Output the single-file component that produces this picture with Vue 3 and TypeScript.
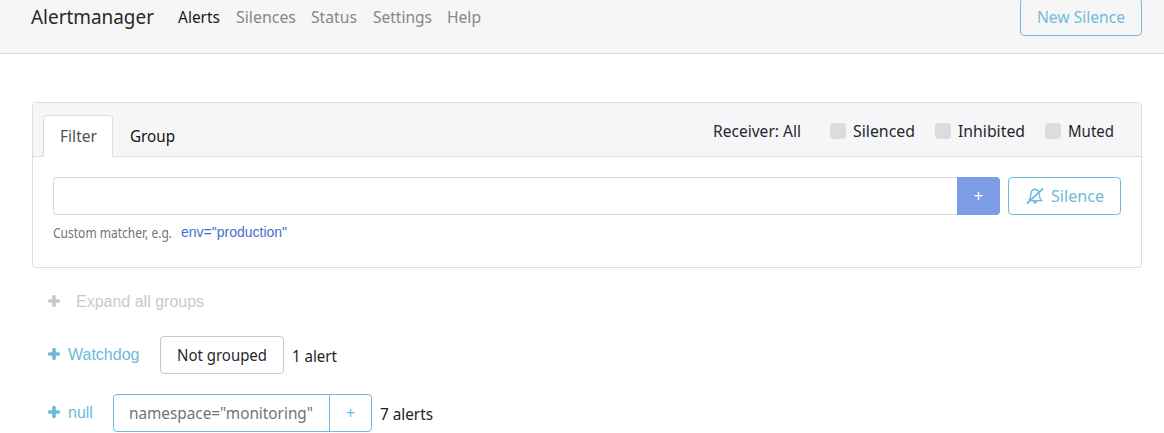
<script setup lang="ts">
import { h } from 'vue'

interface LabelProps {
  text: string
  width: number
  size?: number
}

// Condensed label: glyphs are fitted to the given advance width.
const Label = (props: LabelProps) =>
  h('svg', { class: 'label', width: props.width, height: 24, 'aria-label': props.text }, [
    h(
      'text',
      {
        x: 0,
        y: 18,
        'font-size': props.size ?? 16.8,
        textLength: props.width,
        lengthAdjust: 'spacingAndGlyphs',
      },
      props.text,
    ),
  ])
Label.props = ['text', 'width', 'size']

const links = [
  { text: 'Alerts', width: 42, active: true },
  { text: 'Silences', width: 60, active: false },
  { text: 'Status', width: 46, active: false },
  { text: 'Settings', width: 59, active: false },
  { text: 'Help', width: 34, active: false },
]

const checks = [
  { text: 'Silenced', width: 62 },
  { text: 'Inhibited', width: 67 },
  { text: 'Muted', width: 46 },
]
</script>

<template>
  <div class="page">
    <header class="navbar">
      <Label class="brand" text="Alertmanager" :width="123" :size="20.8" />
      <nav class="links">
        <a v-for="l in links" :key="l.text" :class="{ active: l.active }"><Label :text="l.text" :width="l.width" /></a>
      </nav>
      <button class="btn info new"><Label text="New Silence" :width="88" /></button>
    </header>

    <section class="card">
      <div class="card-head">
        <div class="tab current"><Label text="Filter" :width="37" /></div>
        <div class="tab"><Label text="Group" :width="45" /></div>
        <div class="options">
          <Label text="Receiver: All" :width="88" />
          <label v-for="c in checks" :key="c.text" class="check"><i></i><Label :text="c.text" :width="c.width" /></label>
        </div>
      </div>
      <div class="card-body">
        <div class="row">
          <input class="matcher" type="text" />
          <button class="add">+</button>
          <button class="btn info silence">
            <svg class="bell" width="18" height="18" viewBox="0 0 18 18" fill="none" stroke="currentColor">
              <path d="M3 13.4C4.8 11.5 4.7 9.5 4.8 7C5 4.1 6.6 2.5 9 2.5S13 4.1 13.2 7C13.3 9.5 13.3 11.5 15.5 13.6H4" stroke-width="1.4" />
              <path d="M9 2.5V1.3" stroke-width="1.6" />
              <path d="M7 14.4C7.5 16.8 10.8 16.8 11.2 14.4Z" fill="currentColor" stroke-width=".6" />
              <path d="M.7 16.6L17.3 1.4" stroke-width="1.9" />
            </svg>
            <Label text="Silence" :width="53" />
          </button>
        </div>
        <div class="hint"><Label text="Custom matcher, e.g." :width="119" :size="14.4" /><a>env="production"</a></div>
      </div>
    </section>

    <div class="groups">
      <div class="group expand">
        <svg class="plus" width="12" height="12" viewBox="0 0 12 12"><path d="M6 1.6V10.4M1.6 6H10.4" /></svg>
        <span>Expand all groups</span>
      </div>
      <div class="group watchdog">
        <svg class="plus" width="12" height="12" viewBox="0 0 12 12"><path d="M6 1.6V10.4M1.6 6H10.4" /></svg>
        <span>Watchdog</span>
        <button class="btn plain"><Label text="Not grouped" :width="90" /></button>
        <Label class="count" text="1 alert" :width="45" />
      </div>
      <div class="group nulls">
        <svg class="plus" width="12" height="12" viewBox="0 0 12 12"><path d="M6 1.6V10.4M1.6 6H10.4" /></svg>
        <span>null</span>
        <div class="matcher-group">
          <button class="btn info tag"><Label text='namespace="monitoring"' :width="184" /></button>
          <button class="btn info tag-add">+</button>
        </div>
        <Label class="count" text="7 alerts" :width="53" />
      </div>
    </div>
  </div>
</template>

<style>
body {
  margin: 0;
  overflow: hidden;
  background: #fff;
}
.label {
  display: block;
  flex: none;
  overflow: visible;
  fill: currentColor;
  font-family: 'Noto Sans', 'Open Sans', sans-serif;
  font-stretch: 62.5%;
}
</style>

<style scoped>
.page {
  height: 433px;
  overflow: hidden;
  color: #25282c;
  font: 16px/24px 'Liberation Sans', Arial, sans-serif;
}
button,
input,
.card,
.card-head,
.tab,
.navbar {
  box-sizing: border-box;
}
button {
  display: flex;
  align-items: center;
  justify-content: center;
  flex: none;
  height: 38px;
  margin: 0;
  padding: 0;
  font: inherit;
}
.btn {
  border: 1px solid #c4c6c9;
  border-radius: 4px;
  background: transparent;
  color: #25282c;
}
.btn.info {
  border-color: #6fbcd8;
  color: #6fbcd8;
}
.navbar {
  display: flex;
  align-items: flex-start;
  height: 54px;
  padding: 5px 22px 0 31px;
  background: #f6f6f6;
  border-bottom: 1px solid #d5d6d7;
}
.brand {
  margin-top: 1px;
}
.links {
  display: flex;
  flex: 1;
  gap: 15.6px;
  margin-left: 24px;
  color: #85878a;
}
.links .active {
  color: #17191b;
}
.new {
  width: 122px;
  margin-top: -7px;
}
.card {
  height: 166px;
  margin: 48px 22px 0 32px;
  border: 1px solid #dcdddf;
  border-radius: 4px;
}
.card-head {
  display: flex;
  height: 54px;
  padding: 12px 27px 0 10px;
  background: #f6f6f8;
  border-bottom: 1px solid #dcdddf;
  border-radius: 3px 3px 0 0;
}
.tab {
  height: 42px;
  padding: 8px 16px;
  border: 1px solid transparent;
  border-bottom: 0;
  border-radius: 4px 4px 0 0;
  color: #101214;
}
.tab.current {
  width: 70px;
  border-color: #dcdddf;
  background: #fff;
  color: #4d545a;
}
.options {
  display: flex;
  margin: 4px 0 0 auto;
}
.check {
  display: flex;
}
.check i {
  width: 16px;
  height: 16px;
  margin: 4px 7px 0 20px;
  border-radius: 4px;
  background: #dbdcde;
}
.check:first-of-type i {
  margin-left: 29px;
}
.card-body {
  padding: 20px;
}
.row {
  display: flex;
}
.matcher {
  flex: 1;
  min-width: 0;
  height: 38px;
  border: 1px solid #d7d9dc;
  border-right: 0;
  border-radius: 4px 0 0 4px;
  background: #fff;
}
.add {
  width: 43px;
  border: 0;
  border-radius: 0 4px 4px 0;
  background: #7c9de6;
  color: #fff;
}
.silence {
  gap: 7px;
  width: 113px;
  margin-left: 8px;
}
.hint {
  display: flex;
  margin-top: 5px;
  color: #6f757a;
}
.hint a {
  margin-left: 9px;
  color: #3f6fce;
  font-size: 14px;
}
.groups {
  margin-left: 48px;
}
.group {
  display: flex;
  align-items: center;
  height: 38px;
  color: #6cbbd9;
}
.expand {
  margin-top: 15px;
  color: #c9cacb;
}
.expand span {
  margin-left: 16px;
}
.plus {
  margin-bottom: 2px;
  fill: none;
  stroke: currentColor;
  stroke-width: 3.6;
  stroke-linecap: round;
}
.watchdog {
  margin-top: 15px;
}
.group:not(.expand) span {
  margin-left: 8px;
}
.plain {
  width: 124px;
  margin-left: 20.6px;
}
.nulls {
  margin-top: 20px;
}
.matcher-group {
  display: flex;
  margin-left: 20px;
}
.tag {
  width: 217px;
  border-radius: 4px 0 0 4px;
}
.tag .label {
  color: #6f757a;
}
.tag-add {
  width: 43px;
  margin-left: -1px;
  border-radius: 0 4px 4px 0;
}
.count {
  margin: 2px 0 0 8px;
  color: #202326;
}
</style>
